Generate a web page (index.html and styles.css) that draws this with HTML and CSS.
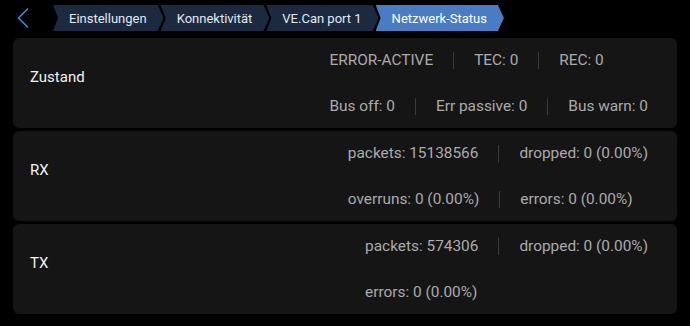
FILE: index.html
```html
<!DOCTYPE html>
<html lang="de">
<head>
<meta charset="utf-8">
<link rel="stylesheet" href="styles.css">
</head>
<body>
<header class="topbar">
  <button class="back" aria-label="Zurück">
    <svg width="14" height="22" viewBox="0 0 14 22"><path d="M12 1.5 L2.5 11 L12 20.5" fill="none" stroke="#4a86d6" stroke-width="1.6"/></svg>
  </button>
  <nav class="crumbs">
    <span class="crumb first">Einstellungen</span>
    <span class="crumb">Konnektivität</span>
    <span class="crumb">VE.Can port 1</span>
    <span class="crumb active">Netzwerk-Status</span>
  </nav>
</header>
<main class="list">
  <section class="panel">
    <div class="label">Zustand</div>
    <div class="values">
      <div class="row"><span>ERROR-ACTIVE</span><i class="sep"></i><span>TEC: 0</span><i class="sep"></i><span>REC: 0</span></div>
      <div class="row"><span>Bus off: 0</span><i class="sep"></i><span>Err passive: 0</span><i class="sep"></i><span>Bus warn: 0</span></div>
    </div>
  </section>
  <section class="panel">
    <div class="label">RX</div>
    <div class="values">
      <div class="row"><span>packets: 15138566</span><i class="sep"></i><span>dropped: 0 (0.00%)</span></div>
      <div class="row"><span>overruns: 0 (0.00%)</span><i class="sep"></i><span>errors: 0 (0.00%)</span></div>
    </div>
  </section>
  <section class="panel">
    <div class="label">TX</div>
    <div class="values">
      <div class="row"><span>packets: 574306</span><i class="sep"></i><span>dropped: 0 (0.00%)</span></div>
      <div class="row"><span>errors: 0 (0.00%)</span></div>
    </div>
  </section>
</main>
</body>
</html>
```
FILE: styles.css
```css
* { box-sizing: border-box; }
html, body { margin: 0; padding: 0; }
body {
  background: #000;
  width: 690px;
  height: 326px;
  overflow: hidden;
  font-family: Roboto, "Noto Sans", sans-serif;
  color: #eee;
}
.topbar {
  height: 38px;
  display: flex;
  align-items: center;
  padding: 0 0 2px 16px;
}
.back {
  background: none;
  border: 0;
  padding: 0;
  width: 37px;
  height: 24px;
  display: flex;
  align-items: center;
  cursor: pointer;
}
.crumbs {
  display: flex;
  align-items: center;
}
.crumb {
  height: 26px;
  display: flex;
  align-items: center;
  padding: 0 17px 0 16px;
  margin-left: -3px;
  background: #1b2a40;
  color: #e4e8ee;
  font-size: 13px;
  white-space: nowrap;
  clip-path: polygon(0 0, calc(100% - 6px) 0, 100% 50%, calc(100% - 6px) 100%, 0 100%, 5px 50%);
}
.crumb.first { margin-left: 0; }
.crumb.active { background: #4a7cc4; color: #fff; }
.list {
  display: flex;
  flex-direction: column;
  gap: 3px;
  padding: 0 13px;
}
.panel {
  background: #151515;
  border-radius: 6px;
  display: flex;
  align-items: center;
  padding: 12px 29px 12px 17px;
}
.label {
  font-size: 15px;
  color: #f2f2f2;
  padding-bottom: 12px;
}
.values {
  margin-left: auto;
  display: flex;
  flex-direction: column;
  align-items: flex-start;
  gap: 26px;
}
.row {
  display: flex;
  align-items: center;
  height: 20px;
  font-size: 15.4px;
  color: #ababab;
  white-space: nowrap;
}
.sep {
  width: 1px;
  height: 17px;
  background: #3a3a3a;
  margin: 0 20px;
}
```
